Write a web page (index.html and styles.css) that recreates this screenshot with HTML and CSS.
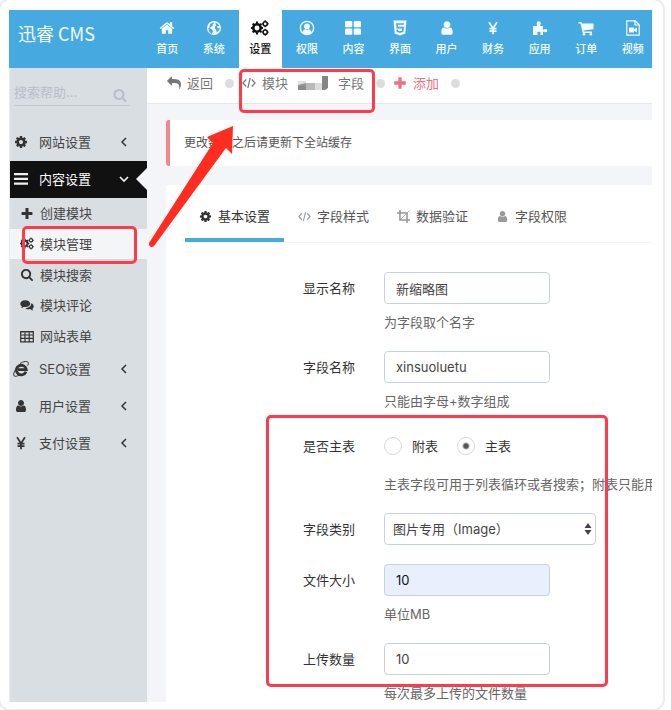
FILE: index.html
```html
<!DOCTYPE html>
<html lang="zh-CN">
<head>
<meta charset="utf-8">
<title>迅睿 CMS</title>
<link rel="stylesheet" href="styles.css">
</head>
<body>
<svg class="sprite" aria-hidden="true">
  <symbol id="home" viewBox="0 0 1792 1792"><path d="M1472 992v480q0 26-19 45t-45 19h-384v-384h-256v384h-384q-26 0-45-19t-19-45v-480q0-1 .5-3t.5-3l575-474 575 474q1 2 1 6zm223-69l-62 74q-8 9-21 11h-3q-13 0-21-7l-692-577-692 577q-12 8-24 7-13-2-21-11l-62-74q-8-10-7-23.5t11-21.5l719-599q32-26 76-26t76 26l244 204v-195q0-14 9-23t23-9h192q14 0 23 9t9 23v408l219 182q10 8 11 21.5t-7 23.5z"/></symbol>
  <symbol id="search" viewBox="0 0 1792 1792"><path d="M1216 832q0-185-131.5-316.5t-316.5-131.5-316.5 131.5-131.5 316.5 131.5 316.5 316.5 131.5 316.5-131.5 131.5-316.5zm512 832q0 52-38 90t-90 38q-54 0-90-38l-343-342q-179 124-399 124-143 0-273.5-55.5t-225-150-150-225-55.5-273.5 55.5-273.5 150-225 225-150 273.5-55.5 273.5 55.5 225 150 150 225 55.5 273.5q0 220-124 399l343 343q37 37 37 90z"/></symbol>
  <symbol id="cog" viewBox="0 0 1792 1792"><path d="M1152 896q0-106-75-181t-181-75-181 75-75 181 75 181 181 75 181-75 75-181zm512-109v222q0 12-8 23t-20 13l-185 28q-19 54-39 91 35 50 107 138 10 12 10 25t-9 23q-27 37-99 108t-94 71q-12 0-26-9l-138-108q-44 23-91 38-16 136-29 186-7 28-36 28h-222q-14 0-24.5-8.5t-11.5-21.5l-28-184q-49-16-90-37l-141 107q-10 9-25 9-14 0-25-11-126-114-165-168-7-10-7-23 0-12 8-23 15-21 51-66.5t54-70.5q-27-50-41-99l-183-27q-13-2-21-12.5t-8-23.5v-222q0-12 8-23t19-13l186-28q14-46 39-92-40-57-107-138-10-12-10-24 0-10 9-23 26-36 98.5-107.5t94.5-71.5q13 0 26 10l138 107q44-23 91-38 16-136 29-186 7-28 36-28h222q14 0 24.5 8.5t11.5 21.5l28 184q49 16 90 37l142-107q9-9 24-9 13 0 25 10 129 119 165 170 7 8 7 22 0 12-8 23-15 21-51 66.5t-54 70.5q26 50 41 98l183 28q13 2 21 12.5t8 23.5z"/></symbol>
  <symbol id="cogs" viewBox="0 0 18 16"><path fill="none" stroke="currentColor" stroke-width="2.600" d="M9.700 8a3.700 3.700 0 1 1-7.400 0 3.700 3.700 0 0 1 7.400 0z"/><path fill="none" stroke="currentColor" stroke-width="2" d="M6 1.500v2M6 12.500v2M-.2 8h2M10 8h2M1.600 3.600 3 5M9 11l1.400 1.400M1.600 12.400 3 11M9 5l1.400-1.400"/><circle cx="14.200" cy="3.800" r="2.100" fill="none" stroke="currentColor" stroke-width="1.500"/><circle cx="14.200" cy="12.200" r="2.100" fill="none" stroke="currentColor" stroke-width="1.500"/><path fill="none" stroke="currentColor" stroke-width="1.300" d="M14.200.3v1M14.200 6.300v1M10.800 3.800h1M16.700 3.800h1M14.200 8.700v1M14.200 14.700v1M10.800 12.200h1M16.700 12.200h1"/></symbol>
  <symbol id="user" viewBox="0 0 1792 1792"><path d="M1536 1399q0 109-62.5 187t-150.5 78h-854q-88 0-150.5-78t-62.5-187q0-85 8.5-160.5t31.5-152 58.5-131 94-89 134.5-34.5q131 128 313 128t313-128q76 0 134.5 34.5t94 89 58.5 131 31.5 152 8.5 160.5zm-256-887q0 159-112.5 271.5t-271.5 112.5-271.5-112.5-112.5-271.5 112.5-271.5 271.5-112.5 271.5 112.5 112.5 271.5z"/></symbol>
  <symbol id="reply" viewBox="0 0 1792 1792"><path d="M1792 1120q0 166-127 451-3 7-10.5 24t-13.5 30-13 22q-12 17-28 17-15 0-23.5-10t-8.5-25q0-9 2.5-26.5t2.5-23.5q5-68 5-123 0-101-17.5-181t-48.5-138.5-80-101-105.5-69.5-133-42.5-154-21.5-175.5-6h-224v256q0 26-19 45t-45 19-45-19l-512-512q-19-19-19-45t19-45l512-512q19-19 45-19t45 19 19 45v256h224q713 0 875 403 53 134 53 333z"/></symbol>
  <symbol id="globe" viewBox="0 0 16 16"><path fill-rule="evenodd" d="M8 1a7 7 0 1 0 0 14A7 7 0 0 0 8 1zM4 4l3-1.600 1 1.200-1.500 1 .2 1.300-2 1.100-.8 1.600 1.600.7 1.800 1.600-1.100 1.700-.4 1.600C4 13 2.400 10.800 2.300 8.200L3.300 8z M9.300 3l2.300.6 1.800 2.200-1.500.3-1 1.200 1.200.9 1.600-.2-.2 1.800-2 2.200-1.100-.6-.3-1.900-1.200-1 .2-2 1.200-1z"/></symbol>
  <symbol id="user-circle" viewBox="0 0 18 18"><circle cx="9" cy="9" r="7.500" fill="none" stroke="currentColor" stroke-width="1.500"/><circle cx="9" cy="7.200" r="3.200"/><path d="M3.800 14c.6-2.700 2-3.700 3.300-3.700 1.200.8 2.600.8 3.800 0 1.300 0 2.700 1 3.300 3.700a7.500 7.500 0 0 1-10.400 0z"/></symbol>
  <symbol id="grid" viewBox="0 0 16 14"><rect width="7.300" height="6.200" rx="1"/><rect x="8.700" width="7.300" height="6.200" rx="1"/><rect y="7.600" width="7.300" height="6.200" rx="1"/><rect x="8.700" y="7.600" width="7.300" height="6.200" rx="1"/></symbol>
  <symbol id="html5" viewBox="0 0 14 16"><path d="M.5.500h13l-1.200 13L7 15.500l-5.300-2z"/><path class="cutout" d="M10.800 4H4l.3 3.600h5.800l-.4 3.600-2.700.9-2.700-.9-.2-1.500"/></symbol>
  <symbol id="yen" viewBox="0 0 14 16"><path fill="none" stroke="currentColor" stroke-width="2" d="M2.500 1.500 7 8.500l4.500-7M7 8v7M3 8.700h8M3 11.500h8"/></symbol>
  <symbol id="puzzle" viewBox="0 0 16 16"><path d="M1 6h4.200c.5-.6-.5-1.200-.5-2.700a2 2 0 0 1 4 0c0 1.500-1 2.100-.5 2.700H11v3.600c.9.300 1.300-.7 2.700-.7a1.700 1.700 0 0 1 0 3.400c-1.400 0-1.800-.9-2.700-.6V15H8.300c-.5-.7.300-1 .3-2 0-1.800-3.200-1.800-3.200 0 0 1 .8 1.300.3 2H1z"/></symbol>
  <symbol id="cart" viewBox="0 0 16 16"><path d="M.5 2h3l.5 1.500h11.500v5.800l-10 1.200.3 1H14V13H4.700L2.500 3.500h-2z"/><circle cx="6" cy="14.200" r="1.300"/><circle cx="12.800" cy="14.200" r="1.300"/></symbol>
  <symbol id="film" viewBox="0 0 14 16"><path fill="none" stroke="currentColor" stroke-width="1.200" d="M.8.800h8.400l4 4v10.400H.8zM9 1v4h4"/><path d="M3 7.500h5v1.800l3-1.900v5.200l-3-1.900v1.800H3z"/></symbol>
  <symbol id="plus" viewBox="0 0 12 12"><path d="M4.600 1h2.800v3.600H11v2.800H7.400V11H4.600V7.400H1V4.600h3.600z"/></symbol>
  <symbol id="bars" viewBox="0 0 14 12"><path d="M0 0h14v2.200H0zM0 4.800h14V7H0zM0 9.600h14v2.200H0z"/></symbol>
  <symbol id="code" viewBox="0 0 14 12"><path fill="none" stroke="currentColor" stroke-width="1.200" d="M4.200 2.500.9 6l3.300 3.500M9.800 2.500 13.100 6 9.800 9.500M8.200 1 5.800 11"/></symbol>
  <symbol id="crop" viewBox="0 0 14 14"><path fill="none" stroke="currentColor" stroke-width="1.700" d="M0 3.200h10.800V14M3.200 0v10.800H14"/><path fill="none" stroke="currentColor" stroke-width=".8" d="M3.500 10.500 13.500.5"/></symbol>
  <symbol id="comments" viewBox="0 0 16 14"><path d="M6 1C2.700 1 .3 2.800.3 5c0 1.300.7 2.300 1.900 3-.2.8-.6 1.200-1.100 1.700 1.300 0 2.300-.5 3-1.100C8.200 9.300 11.700 7.700 11.700 5 11.700 2.800 9.300 1 6 1z"/><path d="M12.700 4.500c.4 3-2.500 5.600-6.700 5.500 1.500 1.300 3.700 1.600 5.700 1.100.9.900 2 1.400 3.500 1.400-.6-.5-1-1-1.200-1.700 2.700-1.700 2.200-5-1.300-6.300z"/></symbol>
  <symbol id="table" viewBox="0 0 14 12"><path fill="none" stroke="currentColor" stroke-width="1.200" d="M.7 1h12.600v10.300H.7zM.7 4.500h12.600M.7 7.900h12.600M5 2v9.300M9.200 2v9.300"/><path d="M.7.500h12.600V2H.7z"/></symbol>
  <symbol id="ie" viewBox="0 0 16 16"><path fill="none" stroke="currentColor" stroke-width="2.800" d="M13 10.800A5 4.800 0 1 1 13.300 8.600H5"/><path fill="none" stroke="currentColor" stroke-width="1" d="M7 2.500C10.500.3 14.500-.3 15.200 1.500c.3.800 0 2-.6 3.200M3 7.800C.8 11 .1 14 1.200 15c1 .7 3 .2 4.800-.8"/></symbol>
  <symbol id="left" viewBox="0 0 8 10"><path fill="none" stroke="currentColor" stroke-width="1.500" d="M6 1 2 5l4 4"/></symbol>
  <symbol id="down" viewBox="0 0 10 8"><path fill="none" stroke="currentColor" stroke-width="1.700" d="M1 2l4 4 4-4"/></symbol>
</svg>

<div class="frame">
<div class="app">
  <header class="topbar">
    <a class="logo" href="#">迅睿 CMS</a>
    <nav class="topnav">
      <a href="#"><svg><use href="#home"/></svg>首页</a>
      <a href="#"><svg><use href="#globe"/></svg>系统</a>
      <a class="active" href="#"><svg class="wide"><use href="#cogs"/></svg>设置</a>
      <a href="#"><svg><use href="#user-circle"/></svg>权限</a>
      <a href="#"><svg><use href="#grid"/></svg>内容</a>
      <a href="#"><svg><use href="#html5"/></svg>界面</a>
      <a href="#"><svg><use href="#user"/></svg>用户</a>
      <a href="#"><svg class="short"><use href="#yen"/></svg>财务</a>
      <a href="#"><svg><use href="#puzzle"/></svg>应用</a>
      <a href="#"><svg><use href="#cart"/></svg>订单</a>
      <a href="#"><svg><use href="#film"/></svg>视频</a>
    </nav>
  </header>

  <div class="body">
    <aside class="sidebar">
      <form class="search">
        <input type="text" placeholder="搜索帮助..." aria-label="搜索帮助">
        <button type="button" aria-label="搜索"><svg><use href="#search"/></svg></button>
      </form>
      <a class="menu" href="#"><svg><use href="#cog"/></svg><span>网站设置</span><svg class="chev"><use href="#left"/></svg></a>
      <a class="menu open" href="#"><svg><use href="#bars"/></svg><span>内容设置</span><svg class="chev"><use href="#down"/></svg></a>
      <div class="submenu">
        <a href="#"><svg><use href="#plus"/></svg>创建模块</a>
        <a class="active" href="#"><svg><use href="#cogs"/></svg>模块管理</a>
        <a href="#"><svg><use href="#search"/></svg>模块搜索</a>
        <a href="#"><svg><use href="#comments"/></svg>模块评论</a>
        <a href="#"><svg><use href="#table"/></svg>网站表单</a>
      </div>
      <a class="menu" href="#"><svg class="big"><use href="#ie"/></svg><span>SEO设置</span><svg class="chev"><use href="#left"/></svg></a>
      <a class="menu" href="#"><svg><use href="#user"/></svg><span>用户设置</span><svg class="chev"><use href="#left"/></svg></a>
      <a class="menu" href="#"><svg><use href="#yen"/></svg><span>支付设置</span><svg class="chev"><use href="#left"/></svg></a>
    </aside>

    <main class="main">
      <div class="crumbs">
        <a href="#"><svg><use href="#reply"/></svg>返回</a>
        <i class="dot"></i>
        <a href="#"><svg><use href="#code"/></svg>模块
          <svg class="mosaic" viewBox="0 0 30 15"><path fill="#8b8b8d" d="M0 9l8-2v7H0z"/><path fill="#aaaaae" d="M0 5h8v5H0z" opacity=".35"/><path fill="#b9b9bb" d="M8 7h9v7H8z"/><path fill="#dcdcdd" d="M17 7h7v7h-7z"/><path fill="#858585" d="M24 0h6v12l-3 2h-3z"/></svg>
          字段</a>
        <i class="dot"></i>
        <a class="add" href="#"><svg><use href="#plus"/></svg>添加</a>
        <i class="dot"></i>
      </div>

      <div class="content">
        <p class="note">更改数据之后请更新下全站缓存</p>

        <section class="panel">
          <nav class="tabs">
            <a class="active" href="#"><svg><use href="#cog"/></svg>基本设置</a>
            <a href="#"><svg><use href="#code"/></svg>字段样式</a>
            <a href="#"><svg><use href="#crop"/></svg>数据验证</a>
            <a href="#"><svg><use href="#user"/></svg>字段权限</a>
          </nav>

          <form class="fields">
            <div class="row">
              <label for="title">显示名称</label>
              <div><input id="title" type="text" value="新缩略图"><p>为字段取个名字</p></div>
            </div>
            <div class="row">
              <label for="name">字段名称</label>
              <div><input id="name" type="text" value="xinsuoluetu"><p>只能由字母+数字组成</p></div>
            </div>
            <div class="row" role="radiogroup" aria-labelledby="main-label">
              <span class="label" id="main-label">是否主表</span>
              <div>
                <div class="radios">
                  <label><input type="radio" name="main">附表</label>
                  <label><input type="radio" name="main" checked>主表</label>
                </div>
                <p class="far">主表字段可用于列表循环或者搜索；附表只能用</p>
              </div>
            </div>
            <div class="row">
              <label for="kind">字段类别</label>
              <div class="select">
                <select id="kind"><option>图片专用（Image）</option></select>
                <svg viewBox="0 0 8 12"><path d="M4 0l3.500 5h-7zM4 12 .5 7h7z"/></svg>
              </div>
            </div>
            <div class="row">
              <label for="size">文件大小</label>
              <div><input id="size" class="filled" type="text" value="10"><p>单位MB</p></div>
            </div>
            <div class="row">
              <label for="count">上传数量</label>
              <div><input id="count" type="text" value="10"><p>每次最多上传的文件数量</p></div>
            </div>
          </form>
        </section>
      </div>
    </main>
  </div>

  <div class="mark mark-crumb"></div>
  <div class="mark mark-menu"></div>
  <div class="mark mark-form"></div>
  <svg class="arrow" viewBox="0 0 88 126"><path d="M85 3 84 31l-6-6L6 123a3 3 0 0 1-5-3L65 20l-6-6z"/></svg>
</div>
</div>
</body>
</html>
```

FILE: styles.css
```css
* { box-sizing: border-box; }

body {
  margin: 0;
  background: #fff;
  color: #444;
  font: 13px/20px Inter, "Noto Sans CJK SC", sans-serif;
  overflow: hidden;
}

a { color: inherit; text-decoration: none; }
p { margin: 0; }
svg { fill: currentColor; flex: none; }
input, select, button { font: inherit; color: inherit; }
.sprite { position: absolute; width: 0; height: 0; }

.frame {
  height: calc(100vh + 3px);
  margin: -2px 6px -1px -2px;
  padding: 10px 11px 7px 9px;
  border: 2px solid #ececec;
  border-radius: 12px;
}

.app {
  position: relative;
  display: flex;
  flex-direction: column;
  height: 100%;
  overflow: hidden;
}

/* Top bar */
.topbar {
  display: flex;
  flex: none;
  height: 58px;
  background: #46aae1;
  color: #f4faff;
}

.logo {
  width: 135px;
  padding: 10px 9px;
  font: 400 18px/26px "Noto Sans CJK SC", sans-serif;
  white-space: nowrap;
}

.topnav {
  display: grid;
  flex: 1;
  grid-template-columns: repeat(11, 1fr);
  margin-right: -4px;
}

.topnav a {
  display: flex;
  flex-direction: column;
  align-items: center;
  gap: 5px;
  margin: 0 2px;
  padding-top: 10px;
  font-size: 11px;
  font-weight: 500;
  line-height: 16px;
}

.topnav svg { width: 16px; height: 16px; }
.topnav .wide { width: 18px; }
.topnav .short { height: 14px; margin: 1px 0; }
.topnav .active { background: #fff; color: #111; }
.cutout { fill: none; stroke: #46aae1; stroke-width: 1.6; }

/* Sidebar */
.body { display: flex; flex: 1; min-height: 0; }

.sidebar {
  flex: none;
  width: 138px;
  border-left: 1px solid #e9ecee;
  background: #d9dee2;
  color: #444;
}

.search {
  display: flex;
  align-items: center;
  height: 38px;
  margin: 0 17px 18px 4px;
  padding-top: 10px;
  border-bottom: 1px solid #c3c8cf;
  color: #b8bdc9;
}

.search input {
  flex: 1;
  min-width: 0;
  padding: 0;
  border: 0;
  background: none;
}

.search input::placeholder { color: #b8bdc9; opacity: 1; }
.search button { padding: 6px 3px 0; border: 0; background: none; line-height: 0; }
.search svg { width: 14px; height: 14px; }

.menu {
  position: relative;
  display: flex;
  align-items: center;
  height: 37px;
  padding: 0 18px 2px 4px;
}

.menu svg { width: 14px; height: 14px; color: #333; }
.menu .big { width: 16px; height: 16px; margin: 0 -1px; }
.menu span { flex: 1; margin-left: 11px; }
.menu .chev { width: 10px; height: 10px; }
.menu.open { background: #111; color: #fff; }
.menu.open svg { color: #eee; }

.menu.open::after {
  content: "";
  position: absolute;
  right: 0;
  border: solid transparent;
  border-width: 11px 11px 11px 0;
  border-right-color: #f4f5f8;
}

.submenu {
  display: flex;
  flex-direction: column;
  justify-content: space-between;
  height: 153px;
}

.submenu a {
  display: flex;
  align-items: center;
  gap: 6px;
  height: 30px;
  padding-left: 10px;
}

.submenu svg { width: 14px; height: 13px; color: #333; }
.submenu .active { background: #f4f5f7; }

/* Main area */
.main {
  display: flex;
  flex: 1;
  flex-direction: column;
  min-width: 0;
  background: #f3f5f8;
}

.crumbs {
  display: flex;
  flex: none;
  align-items: center;
  height: 36px;
  padding: 0 20px 5px;
  border-bottom: 1px solid #e4e7eb;
  background: #fff;
  color: #777;
}

.crumbs a { display: flex; align-items: center; white-space: nowrap; }
.crumbs svg { width: 14px; height: 14px; margin-right: 6px; }
.crumbs .mosaic { width: 30px; height: 15px; margin: 0 10px; }
.crumbs .add { color: #f0707e; }
.dot { width: 9px; height: 9px; margin: 0 12px; border-radius: 50%; background: #ddd; }
.dot + a { margin-left: -4px; }

.content { display: flex; flex: 1; flex-direction: column; padding: 16px 0 0 19px; min-height: 0; }

.note {
  margin-bottom: 19px;
  padding: 13px 14px;
  border-left: 4px solid #f3858f;
  border-radius: 3px 0 0 3px;
  background: #fff;
  color: #555;
  font-size: 12px;
}

.panel { flex: 1; padding-left: 19px; background: #fff; min-height: 0; }

.tabs {
  display: flex;
  height: 58px;
  border-bottom: 1px solid #f2f3f4;
  color: #555;
}

.tabs a {
  display: flex;
  align-items: center;
  gap: 6px;
  padding: 9px 14px 0;
  border-bottom: 4px solid transparent;
  white-space: nowrap;
}

.tabs svg { width: 13px; height: 13px; color: #999; }
.tabs .active { border-color: #46aae1; color: #333; }
.tabs .active svg { color: #333; }

/* Form */
.fields { padding-top: 29px; }

.row {
  display: grid;
  grid-template-columns: 170px minmax(0, 1fr);
  column-gap: 29px;
  margin-bottom: 19px;
}

.row > label, .row > .label {
  color: #333;
  line-height: 32px;
  text-align: right;
}

.fields input[type="text"], .fields select {
  display: block;
  width: 166px;
  height: 32px;
  padding: 0 11px;
  border: 1px solid #c8d0de;
  border-radius: 4px;
  background: #fff;
  color: #444;
}

.fields input.filled { background: #e8effd; color: #111; }
.row p { margin-top: 8px; color: #666; white-space: nowrap; }
.row p.far { margin-top: 12px; }

.radios { display: flex; gap: 19px; height: 32px; }
.radios label { display: flex; align-items: center; gap: 10px; color: #333; }

.radios input {
  width: 18px;
  height: 18px;
  margin: 0;
  appearance: none;
  border: 1px solid #d8d8d8;
  border-radius: 50%;
}

.radios input:checked { background: radial-gradient(circle, #555 2px, transparent 4px); }

.select { position: relative; width: 212px; }
.fields .select select { width: 100%; padding: 0 8px; appearance: none; }
.select svg { position: absolute; top: 10px; right: 4px; width: 8px; height: 12px; pointer-events: none; }

/* Annotations over the page */
.mark {
  position: absolute;
  border: 3px solid #ff3b4b;
  border-radius: 5px;
  pointer-events: none;
}

.mark-crumb { left: 230px; top: 59px; width: 136px; height: 44px; }
.mark-menu { left: 13px; top: 216px; width: 115px; height: 38px; }
.mark-form { left: 257px; top: 405px; width: 342px; height: 272px; }

.arrow {
  position: absolute;
  left: 139px;
  top: 113px;
  width: 88px;
  height: 126px;
  color: #ff2d20;
  pointer-events: none;
}
```
